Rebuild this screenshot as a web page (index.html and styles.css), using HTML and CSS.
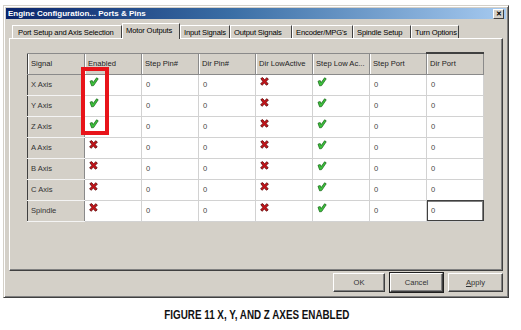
FILE: index.html
```html
<!DOCTYPE html>
<html lang="en">
<head>
	<meta charset="UTF-8">
	<title>Ports &amp; Pins</title>
	<link rel="stylesheet" href="styles.css">
</head>
<body>
	<div class="dialog">
		<div class="titlebar">
			<span class="title">Engine Configuration... Ports &amp; Pins</span>
			<span class="close">&#x2715;</span>
		</div>
		<div class="tabs">
			<div class="tab t1">Port Setup and Axis Selection</div>
			<div class="tab t2 active">Motor Outputs</div>
			<div class="tab t3">Input Signals</div>
			<div class="tab t4">Output Signals</div>
			<div class="tab t5">Encoder/MPG's</div>
			<div class="tab t6">Spindle Setup</div>
			<div class="tab t7">Turn Options</div>
		</div>
		<div class="panel">
			<table class="grid">
				<colgroup>
					<col><col><col><col><col><col><col><col>
				</colgroup>
				<tr>
					<th>Signal</th>
					<th>Enabled</th>
					<th>Step Pin#</th>
					<th>Dir Pin#</th>
					<th>Dir LowActive</th>
					<th>Step Low Ac...</th>
					<th>Step Port</th>
					<th class="sorted">Dir Port</th>
				</tr>
				<tr>
					<td class="sig">X Axis</td>
					<td class="ico"><svg class="yes"><use href="#ok"/></svg></td>
					<td>0</td><td>0</td>
					<td class="ico"><svg class="no"><use href="#bad"/></svg></td>
					<td class="ico"><svg class="yes"><use href="#ok"/></svg></td>
					<td>0</td><td>0</td>
				</tr>
				<tr>
					<td class="sig">Y Axis</td>
					<td class="ico"><svg class="yes"><use href="#ok"/></svg></td>
					<td>0</td><td>0</td>
					<td class="ico"><svg class="no"><use href="#bad"/></svg></td>
					<td class="ico"><svg class="yes"><use href="#ok"/></svg></td>
					<td>0</td><td>0</td>
				</tr>
				<tr>
					<td class="sig">Z Axis</td>
					<td class="ico"><svg class="yes"><use href="#ok"/></svg></td>
					<td>0</td><td>0</td>
					<td class="ico"><svg class="no"><use href="#bad"/></svg></td>
					<td class="ico"><svg class="yes"><use href="#ok"/></svg></td>
					<td>0</td><td>0</td>
				</tr>
				<tr>
					<td class="sig">A Axis</td>
					<td class="ico"><svg class="no"><use href="#bad"/></svg></td>
					<td>0</td><td>0</td>
					<td class="ico"><svg class="no"><use href="#bad"/></svg></td>
					<td class="ico"><svg class="yes"><use href="#ok"/></svg></td>
					<td>0</td><td>0</td>
				</tr>
				<tr>
					<td class="sig">B Axis</td>
					<td class="ico"><svg class="no"><use href="#bad"/></svg></td>
					<td>0</td><td>0</td>
					<td class="ico"><svg class="no"><use href="#bad"/></svg></td>
					<td class="ico"><svg class="yes"><use href="#ok"/></svg></td>
					<td>0</td><td>0</td>
				</tr>
				<tr>
					<td class="sig">C Axis</td>
					<td class="ico"><svg class="no"><use href="#bad"/></svg></td>
					<td>0</td><td>0</td>
					<td class="ico"><svg class="no"><use href="#bad"/></svg></td>
					<td class="ico"><svg class="yes"><use href="#ok"/></svg></td>
					<td>0</td><td>0</td>
				</tr>
				<tr>
					<td class="sig current">Spindle</td>
					<td class="ico"><svg class="no"><use href="#bad"/></svg></td>
					<td>0</td><td>0</td>
					<td class="ico"><svg class="no"><use href="#bad"/></svg></td>
					<td class="ico"><svg class="yes"><use href="#ok"/></svg></td>
					<td>0</td>
					<td class="focus">0</td>
				</tr>
			</table>
		</div>
		<div class="buttons">
			<div class="btn b-ok">OK</div>
			<div class="btn b-cancel">Cancel</div>
			<div class="btn b-apply"><u>A</u>pply</div>
		</div>
	</div>
	<div class="highlight"></div>
	<p class="caption"><span>FIGURE 11 X, Y, AND Z AXES ENABLED</span></p>

	<svg width="0" height="0" style="position:absolute">
		<defs>
			<g id="ok">
				<path d="M1 4.2 L3.2 3.6 L4.2 5.6 L7.6 0.8 L9.2 1.8 L4.6 8.6 L2.6 8.8 Z" fill="#3cc43c" stroke="#1d6b1d" stroke-width="0.8" stroke-linejoin="round"/>
			</g>
			<g id="bad">
				<path d="M0.8 1.6 L2.6 0.6 L4.6 2.8 L6.8 0.8 L8.4 2 L6.2 4.4 L8.2 7 L6.4 8.2 L4.4 6 L2.2 8.2 L0.6 7 L2.8 4.4 Z" fill="#c8141a" stroke="#5a0a0a" stroke-width="0.8" stroke-linejoin="round"/>
			</g>
		</defs>
	</svg>
</body>
</html>
```

FILE: styles.css
```css
body {
	margin: 0;
	background: #fff;
	font-family: "Liberation Sans", Arial, sans-serif;
	font-size: 7.6px;
	color: #000;
}
.dialog {
	width: 506px;
	height: 293px;
	margin: 5px 0 0 3px;
	box-sizing: border-box;
	background: #d4d0c8;
	border: 1px solid;
	border-color: #d4d0c8 #404040 #404040 #d4d0c8;
	box-shadow: inset 1px 1px #fff, inset -1px -1px #808080;
	padding: 2px 2px 0 2px;
}
.titlebar {
	height: 11px;
	display: flex;
	align-items: center;
	justify-content: space-between;
	padding: 0 2px;
	background: linear-gradient(to right, #0a246a, #3a6ea5 45%, #a6caf0);
}
.title {
	color: #fff;
	font-weight: bold;
	font-size: 8px;
}
.close {
	width: 9px;
	height: 8px;
	background: #d4d0c8;
	border: 1px solid;
	border-color: #fff #404040 #404040 #fff;
	font-size: 7px;
	font-weight: bold;
	line-height: 8px;
	text-align: center;
	color: #000;
}

.tabs {
	display: flex;
	align-items: flex-end;
	height: 16px;
	margin: 3px 0 0 6px;
}
.tab {
	height: 13px;
	line-height: 13px;
	box-sizing: border-box;
	padding: 0 0 0 3px;
	border-top: 1px solid #fff;
	border-left: 1px solid #fff;
	border-right: 1px solid #404040;
	color: #000;
	letter-spacing: -0.15px;
	white-space: nowrap;
	overflow: hidden;
}
.tab.active {
	height: 16px;
	line-height: 13px;
	margin-bottom: -1px;
	background: #d4d0c8;
	position: relative;
	z-index: 1;
}
.t1 { width: 110px; padding-left: 5px; }
.t2 { width: 58px; }
.t3 { width: 50px; }
.t4 { width: 62px; }
.t5 { width: 61px; }
.t6 { width: 58px; }
.t7 { width: 48px; }

.panel {
	width: 494px;
	height: 233px;
	margin-left: 3px;
	box-sizing: border-box;
	border: 1px solid;
	border-color: #fff #404040 #404040 #fff;
	box-shadow: inset -1px -1px #808080;
	padding: 13px 0 0 17px;
}
.grid {
	border-collapse: collapse;
	table-layout: fixed;
	width: 456px;
	border-left: 1px solid #404040;
}
.grid col {
	width: 57px;
}
.grid tr {
	height: 21px;
}
.grid th,
.grid td {
	padding: 0 3px;
	text-align: left;
	font-weight: normal;
	white-space: nowrap;
	overflow: hidden;
}
.grid th {
	background: #d4d0c8;
	border-top: 1px solid #8a8a8a;
	border-right: 1px solid #8a8a8a;
	border-bottom: 1px solid #8a8a8a;
	box-shadow: inset 1px 0 #fff;
	color: #222;
}
.grid th.sorted {
	border-top: 2px solid #404040;
	border-left: 1px solid #404040;
}
.grid td {
	background: #fff;
	border: 1px solid #d2d2d2;
	color: #444;
	padding-left: 4px;
}
.grid td.sig {
	background: #d4d0c8;
	border-color: #f4f4f4 #8a8a8a #f4f4f4 #404040;
	color: #333;
	padding-left: 3px;
}
.grid td.sig.current {
	border-top: 1px solid #404040;
}
.grid td.ico {
	vertical-align: top;
	padding-top: 2px;
}
.grid td.focus {
	outline: 1px solid #404040;
	outline-offset: -1px;
	box-shadow: inset 0 0 0 1px #808080;
}
.yes,
.no {
	display: block;
	width: 10px;
	height: 10px;
}

.buttons {
	display: flex;
	justify-content: flex-end;
	gap: 5px;
	width: 497px;
	margin-top: 2px;
}
.btn {
	height: 19px;
	box-sizing: border-box;
	line-height: 17px;
	text-align: center;
	border: 1px solid;
	border-color: #fff #404040 #404040 #fff;
	box-shadow: inset -1px -1px #808080;
	color: #333;
}
.b-ok { width: 52px; }
.b-cancel {
	width: 53px;
	outline: 1px solid #202020;
}
.b-apply { width: 55px; }

.highlight {
	position: absolute;
	left: 81px;
	top: 67px;
	width: 28px;
	height: 68px;
	box-sizing: border-box;
	border: 4px solid #e8141a;
}
.caption {
	margin: 10px 0 0;
	padding-right: 8px;
	text-align: center;
	line-height: 14px;
}
.caption span {
	display: inline-block;
	font-size: 12px;
	font-weight: bold;
	transform: scaleX(0.82);
	color: #111;
}
```
